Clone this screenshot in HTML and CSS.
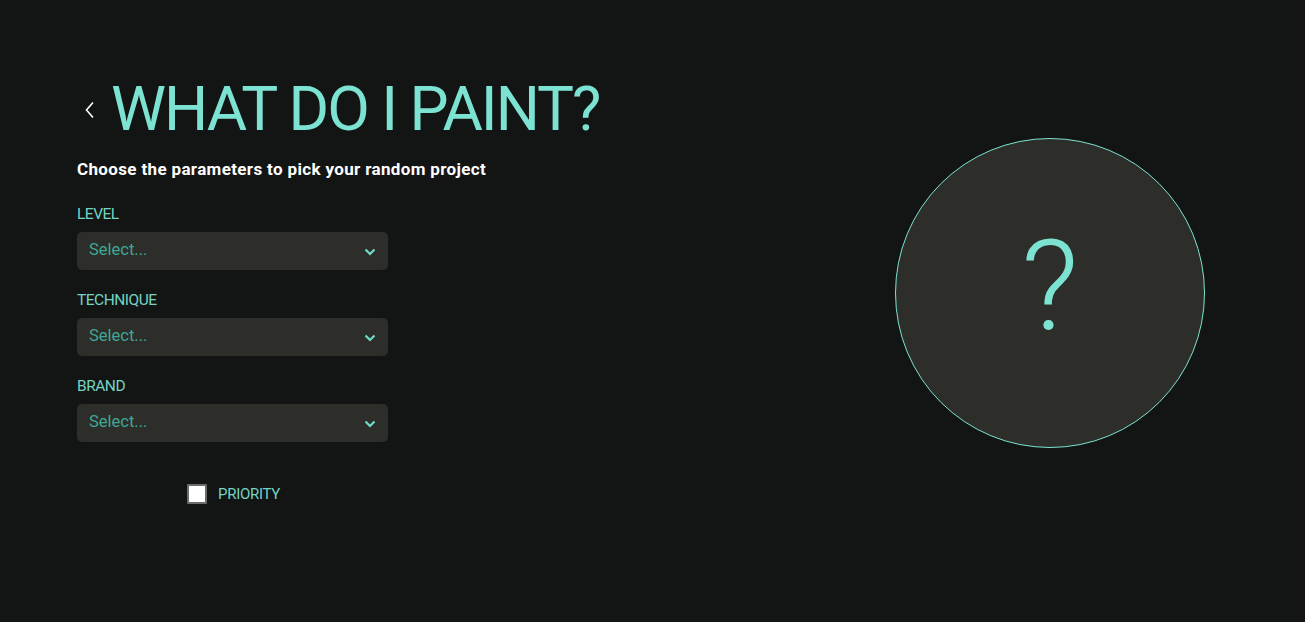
FILE: index.html
```html
<!DOCTYPE html>
<html>
<head>
<meta charset="utf-8">
<link rel="stylesheet" href="styles.css">
</head>
<body>
<div class="page">
  <div class="left">
    <div class="title-row">
      <span class="back">
        <svg width="12" height="18" viewBox="0 0 12 18"><path d="M9 1.5 L2.5 9 L9 16.5" fill="none" stroke="#ffffff" stroke-width="1.6"/></svg>
      </span>
      <h1 class="title">WHAT DO I PAINT?</h1>
    </div>
    <p class="subtitle">Choose the parameters to pick your random project</p>
    <div class="form">
      <div class="field">
        <div class="label">LEVEL</div>
        <div class="select"><span>Select...</span><svg class="chev" width="12" height="8" viewBox="0 0 12 8"><path d="M1.5 1.5 L6 6 L10.5 1.5" fill="none" stroke="#6fdcc9" stroke-width="2.2"/></svg></div>
      </div>
      <div class="field">
        <div class="label">TECHNIQUE</div>
        <div class="select"><span>Select...</span><svg class="chev" width="12" height="8" viewBox="0 0 12 8"><path d="M1.5 1.5 L6 6 L10.5 1.5" fill="none" stroke="#6fdcc9" stroke-width="2.2"/></svg></div>
      </div>
      <div class="field">
        <div class="label">BRAND</div>
        <div class="select"><span>Select...</span><svg class="chev" width="12" height="8" viewBox="0 0 12 8"><path d="M1.5 1.5 L6 6 L10.5 1.5" fill="none" stroke="#6fdcc9" stroke-width="2.2"/></svg></div>
      </div>
      <label class="check"><span class="box"></span><span class="check-text">PRIORITY</span></label>
    </div>
  </div>
  <div class="right">
    <div class="circle"><span class="q">?</span></div>
  </div>
</div>
</body>
</html>
```
FILE: styles.css
```css
html, body {
  margin: 0;
  padding: 0;
  background: #131514;
  font-family: Roboto, "Liberation Sans", sans-serif;
}
.page {
  display: flex;
  justify-content: space-between;
  padding: 0 100px 0 77px;
  height: 622px;
  box-sizing: border-box;
}
.left {
  display: flex;
  flex-direction: column;
  padding-top: 74px;
}
.title-row {
  display: flex;
  align-items: center;
}
.back {
  display: flex;
  width: 43px;
  justify-content: center;
  margin-left: -9px;
  margin-top: 2px;
}
.title {
  margin: 0;
  font-family: Roboto, sans-serif;
  font-weight: 400;
  font-size: 62px;
  line-height: 70px;
  color: #7ce3d2;
  letter-spacing: -2px;
}
.subtitle {
  margin: 15px 0 0;
  color: #ffffff;
  font-weight: 700;
  font-size: 17px;
  line-height: 20px;
  letter-spacing: 0.35px;
}
.form {
  width: 311px;
  display: flex;
  flex-direction: column;
  margin-top: 27px;
}
.field {
  display: flex;
  flex-direction: column;
  margin-bottom: 22px;
}
.label {
  color: #73d4c3;
  font-size: 15.5px;
  line-height: 16px;
  margin-bottom: 10px;
  letter-spacing: -0.5px;
}
.select {
  height: 38px;
  background: #2d2e29;
  border-radius: 5px;
  display: flex;
  align-items: center;
  justify-content: space-between;
  padding: 0 12px;
  color: #3fa795;
  font-size: 16.5px;
}
.select span {
  margin-top: -3px;
}
.chev {
  margin-top: 2px;
}
.check {
  display: flex;
  align-items: center;
  justify-content: center;
  gap: 11px;
  margin-top: 20px;
  margin-left: 2px;
}
.box {
  width: 16px;
  height: 16px;
  background: #ffffff;
  border: 2px solid #6b6b6b;
  border-radius: 1px;
}
.check-text {
  color: #73d4c3;
  font-size: 15px;
  letter-spacing: -0.3px;
}
.right {
  padding-top: 138px;
}
.circle {
  width: 310px;
  height: 310px;
  box-sizing: border-box;
  border-radius: 50%;
  border: 1px solid #7ce3d2;
  background: #2d2e29;
  display: flex;
  align-items: center;
  justify-content: center;
}
.q {
  color: #7ce3d2;
  font-size: 126px;
  line-height: 1;
  font-weight: 300;
  margin-top: -15px;
}
```
